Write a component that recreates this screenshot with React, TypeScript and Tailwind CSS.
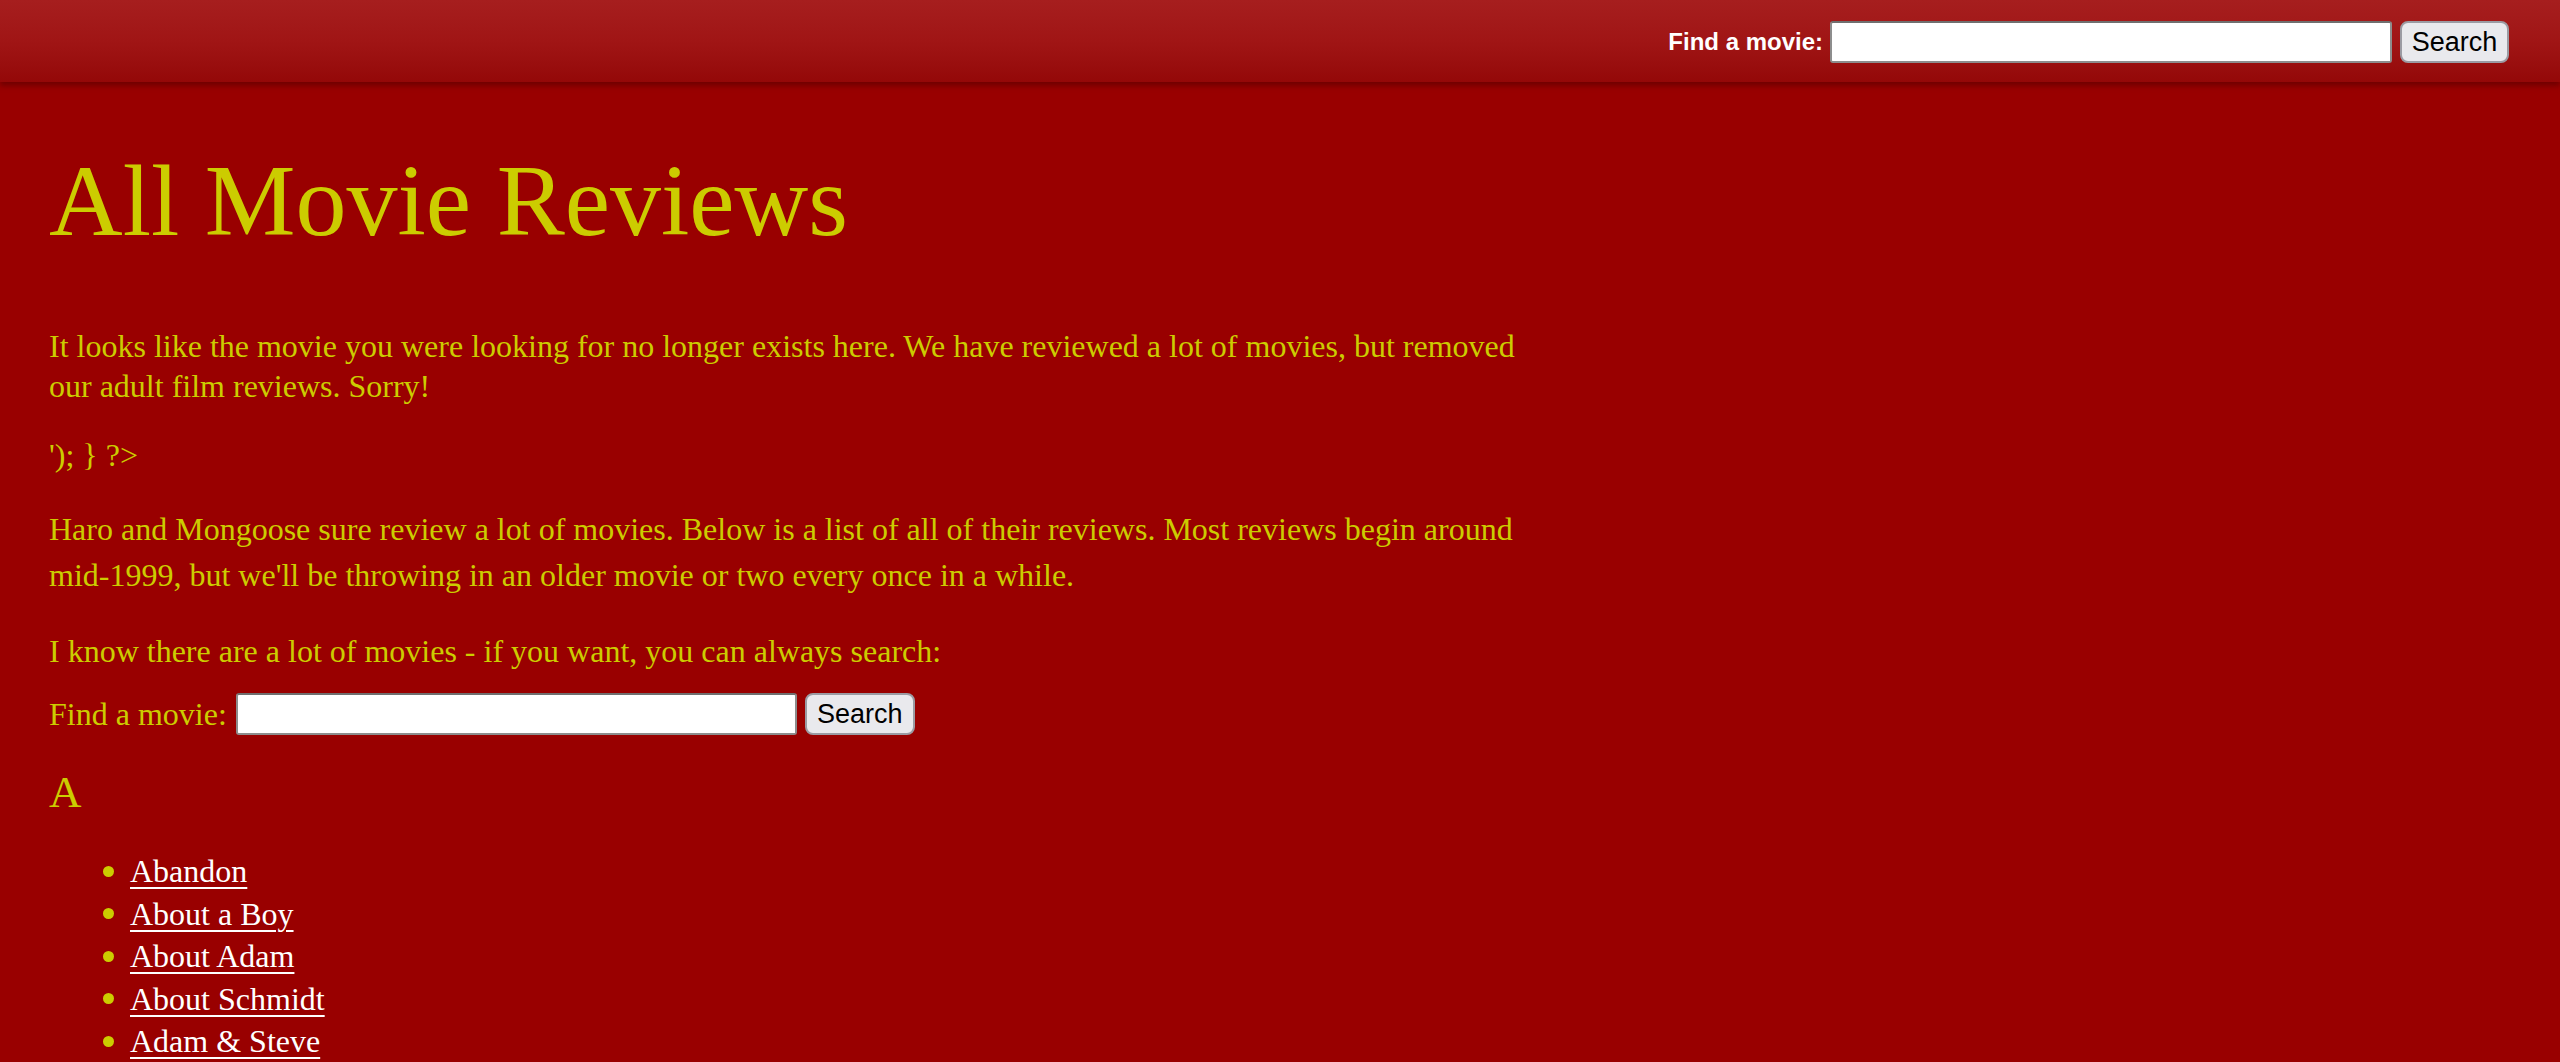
import React from "react";

const serif = { fontFamily: '"Liberation Serif", "Times New Roman", serif' };

function SearchForm({ header }: { header?: boolean }) {
  return (
    <form
      className="flex items-center"
      onSubmit={(e) => e.preventDefault()}
    >
      <label
        className={
          header
            ? "mr-[7px] text-[24px] font-bold text-white font-['Liberation_Sans',Arial,sans-serif] leading-[42px]"
            : "mr-[9px] text-[32px] text-[#cccc00] font-['Liberation_Serif','Times_New_Roman',serif] leading-[40px]"
        }
      >
        Find a movie:
      </label>
      <input
        type="text"
        className={
          (header ? "w-[562px]" : "w-[561px]") +
          " h-[42px] rounded-[3px] border-2 border-[#8d8d8d] border-t-[#6f6f6f] bg-white outline-none"
        }
      />
      <button
        type="submit"
        className={
          (header ? "w-[109px]" : "w-[110px]") +
          " ml-[8px] h-[42px] rounded-[8px] border-2 border-[#9b9ba3] bg-[#e9e9ed] text-[27px] leading-none text-black font-['Liberation_Sans',Arial,sans-serif]"
        }
      >
        Search
      </button>
    </form>
  );
}

const movies = [
  "Abandon",
  "About a Boy",
  "About Adam",
  "About Schmidt",
  "Adam & Steve",
  "Adaptation",
  "The Addams Family",
];

export default function App() {
  return (
    <div className="min-h-[1062px] bg-[#990000]" style={serif}>
      <header className="relative z-10 flex h-[82px] items-start justify-end bg-gradient-to-b from-[#a61e1e] via-[#a01515] to-[#940808] pr-[51px] pt-[21px] shadow-[0_4px_5px_rgba(110,0,0,0.9)]">
        <SearchForm header />
      </header>
      <main className="w-[1539px] pl-[49px] text-[#cccc00] font-['Liberation_Serif','Times_New_Roman',serif]">
        <h1 className="mt-[59px] text-[102px] leading-[120px] font-normal">
          All Movie Reviews
        </h1>
        <p className="mt-[65px] text-[32px] leading-[40px]">
          It looks like the movie you were looking for no longer exists here.
          We have reviewed a lot of movies, but removed our adult film
          reviews. Sorry!
        </p>
        <p className="mt-[29px] text-[32px] leading-[40px]">'); {"}"} ?&gt;</p>
        <p className="mt-[31px] text-[32px] leading-[46px]">
          Haro and Mongoose sure review a lot of movies. Below is a list of
          all of their reviews. Most reviews begin around mid-1999, but we'll
          be throwing in an older movie or two every once in a while.
        </p>
        <p className="mt-[30px] text-[32px] leading-[46px]">
          I know there are a lot of movies - if you want, you can always
          search:
        </p>
        <div className="mt-[19px]">
          <SearchForm />
        </div>
        <h3 className="mt-[31px] text-[45px] leading-[52px] font-normal">A</h3>
        <ul className="mt-[32px] pb-[40px]">
          {movies.map((m) => (
            <li key={m} className="flex items-center text-[32px] leading-[42.5px]">
              <span className="ml-[54px] mr-[16px] h-[11px] w-[11px] rounded-full bg-[#cccc00]" />
              <a href="#" className="text-white underline decoration-[2px] underline-offset-[5px]">
                {m}
              </a>
            </li>
          ))}
        </ul>
      </main>
    </div>
  );
}
